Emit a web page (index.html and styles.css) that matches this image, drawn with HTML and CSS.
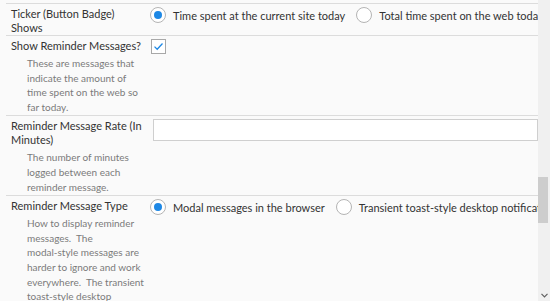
FILE: index.html
```html
<!DOCTYPE html>
<html>
<head>
<meta charset="utf-8">
<link rel="stylesheet" href="styles.css">
</head>
<body>
<div class="window">
  <div class="content">
    <div class="row">
      <div class="label"><div class="title">Ticker (Button Badge) Shows</div></div>
      <div class="control">
        <label class="opt"><span class="radio checked"></span><span>Time spent at the current site today</span></label>
        <label class="opt"><span class="radio"></span><span>Total time spent on the web today</span></label>
      </div>
    </div>
    <div class="row">
      <div class="label">
        <div class="title">Show Reminder Messages?</div>
        <div class="desc">These are messages that indicate the amount of time spent on the web so far today.</div>
      </div>
      <div class="control">
        <span class="check"><svg width="11" height="9" viewBox="0 0 11 9"><path d="M1.5 4.6 L4.2 7.3 L9.5 1.5" fill="none" stroke="#1e88e5" stroke-width="1.3"/></svg></span>
      </div>
    </div>
    <div class="row">
      <div class="label">
        <div class="title">Reminder Message Rate (In Minutes)</div>
        <div class="desc">The number of minutes logged between each reminder message.</div>
      </div>
      <div class="control">
        <div class="input"></div>
      </div>
    </div>
    <div class="row">
      <div class="label">
        <div class="title">Reminder Message Type</div>
        <div class="desc">How to display reminder messages.&nbsp; The <span class="nw">modal-style</span> messages are harder to ignore and work everywhere.&nbsp; The transient <span class="nw">toast-style</span> desktop notifications are less intrusive.</div>
      </div>
      <div class="control">
        <label class="opt"><span class="radio checked"></span><span>Modal messages in the browser</span></label>
        <label class="opt"><span class="radio"></span><span>Transient toast-style desktop notifications</span></label>
      </div>
    </div>
  </div>
  <div class="scrollbar">
    <div class="track"><div class="thumb"></div></div>
    <div class="arrow"><svg width="7" height="5" viewBox="0 0 7 5"><path d="M0.5 0.8 L3.5 3.8 L6.5 0.8" fill="none" stroke="#606060" stroke-width="1.2"/></svg></div>
  </div>
</div>
</body>
</html>
```
FILE: styles.css
```css
html, body {
  margin: 0;
  padding: 0;
  background: #fafafa;
}
.window {
  display: flex;
  width: 550px;
  height: 301px;
  overflow: hidden;
  font-family: "Lato", "Open Sans", sans-serif;
  font-size: 11px;
  color: #333;
}
.content {
  flex: 1;
  min-width: 0;
  overflow: hidden;
  padding-top: 3px;
  padding-left: 6px;
}
.row {
  display: grid;
  grid-template-columns: 144px 1fr;
  border-top: 1px solid #dcdcdc;
  padding: 3px 0 0 0;
}
.label {
  padding-left: 5px;
}
.title {
  line-height: 14px;
  padding-right: 7px;
}
.desc {
  color: #7a7a7a;
  font-size: 10px;
  padding-left: 16px;
  padding-right: 5px;
  margin: 3px 0 1px;
  line-height: 14.6px;
}
.nw { white-space: nowrap; }
.control {
  display: flex;
  align-items: flex-start;
  white-space: nowrap;
  overflow: hidden;
  min-width: 0;
}
.opt {
  display: flex;
  align-items: center;
  gap: 7px;
  margin-right: 11px;
  height: 16px;
}
.radio {
  flex: none;
  width: 14px;
  height: 14px;
  border: 1px solid #b4b4b4;
  border-radius: 50%;
  background: #fff;
  display: flex;
  align-items: center;
  justify-content: center;
}
.radio.checked::after {
  content: "";
  width: 8px;
  height: 8px;
  border-radius: 50%;
  background: #1e88e5;
}
.check {
  margin-left: 1px;
  width: 13px;
  height: 13px;
  border: 1px solid #a8a8a8;
  background: #fff;
  display: flex;
  align-items: center;
  justify-content: center;
}
.input {
  margin-left: 3px;
  width: 100%;
  height: 20px;
  border: 1px solid #cfcfcf;
  background: #fff;
}
.scrollbar {
  flex: none;
  width: 12px;
  background: #f0f0f0;
  display: flex;
  flex-direction: column;
}
.track {
  flex: 1;
  padding-top: 177px;
}
.thumb {
  width: 10px;
  height: 46px;
  background: #cdcdcd;
}
.arrow {
  height: 8px;
  display: flex;
  justify-content: center;
  align-items: flex-start;
}
```
